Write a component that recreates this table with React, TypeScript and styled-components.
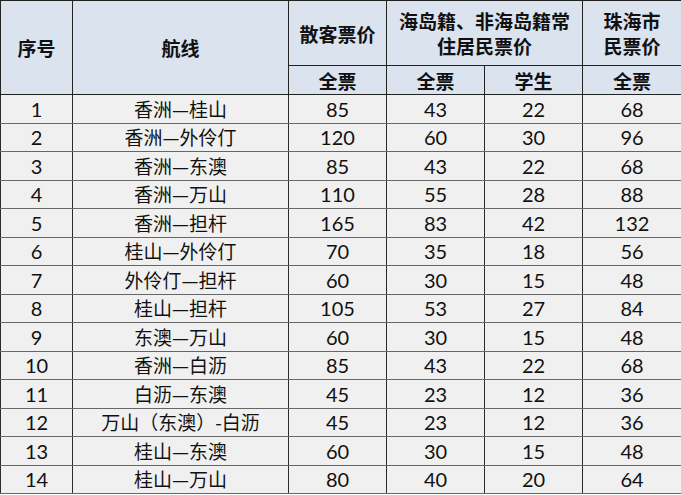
import styled, { createGlobalStyle } from 'styled-components';

type Fare = {
	id: number;
	route: string;
	walkIn: number;
	full: number;
	student: number;
	local: number;
};

const fares: Fare[] = [
	{ id: 1, route: '香洲—桂山', walkIn: 85, full: 43, student: 22, local: 68 },
	{ id: 2, route: '香洲—外伶仃', walkIn: 120, full: 60, student: 30, local: 96 },
	{ id: 3, route: '香洲—东澳', walkIn: 85, full: 43, student: 22, local: 68 },
	{ id: 4, route: '香洲—万山', walkIn: 110, full: 55, student: 28, local: 88 },
	{ id: 5, route: '香洲—担杆', walkIn: 165, full: 83, student: 42, local: 132 },
	{ id: 6, route: '桂山—外伶仃', walkIn: 70, full: 35, student: 18, local: 56 },
	{ id: 7, route: '外伶仃—担杆', walkIn: 60, full: 30, student: 15, local: 48 },
	{ id: 8, route: '桂山—担杆', walkIn: 105, full: 53, student: 27, local: 84 },
	{ id: 9, route: '东澳—万山', walkIn: 60, full: 30, student: 15, local: 48 },
	{ id: 10, route: '香洲—白沥', walkIn: 85, full: 43, student: 22, local: 68 },
	{ id: 11, route: '白沥—东澳', walkIn: 45, full: 23, student: 12, local: 36 },
	{ id: 12, route: '万山（东澳）-白沥', walkIn: 45, full: 23, student: 12, local: 36 },
	{ id: 13, route: '桂山—东澳', walkIn: 60, full: 30, student: 15, local: 48 },
	{ id: 14, route: '桂山—万山', walkIn: 80, full: 40, student: 20, local: 64 },
];

const colWidths = [72, 216, 98, 98, 98, 99];

export default function App() {
	return (
		<>
			<GlobalStyle />
			<FareTable>
				<colgroup>
					{colWidths.map((w, i) => (
						<col key={i} style={{ width: w }} />
					))}
				</colgroup>
				<thead>
					<TopHeadRow>
						<HeadCell rowSpan={2}>序号</HeadCell>
						<HeadCell rowSpan={2}>航线</HeadCell>
						<HeadCell>散客票价</HeadCell>
						<HeadCell colSpan={2}>
							海岛籍、非海岛籍常
							<br />
							住居民票价
						</HeadCell>
						<HeadCell>
							珠海市
							<br />
							民票价
						</HeadCell>
					</TopHeadRow>
					<SubHeadRow>
						<HeadCell>全票</HeadCell>
						<HeadCell>全票</HeadCell>
						<HeadCell>学生</HeadCell>
						<HeadCell>全票</HeadCell>
					</SubHeadRow>
				</thead>
				<tbody>
					{fares.map((f) => (
						<DataRow key={f.id}>
							<Cell>{f.id}</Cell>
							<Cell $cjk>{f.route}</Cell>
							<Cell>{f.walkIn}</Cell>
							<Cell>{f.full}</Cell>
							<Cell>{f.student}</Cell>
							<Cell>{f.local}</Cell>
						</DataRow>
					))}
				</tbody>
			</FareTable>
		</>
	);
}

const GlobalStyle = createGlobalStyle`
	html, body {
		margin: 0;
		padding: 0;
		background: #ffffff;
	}
`;

const FareTable = styled.table`
	width: 681px;
	table-layout: fixed;
	border-collapse: collapse;
	font-family: Lato, 'Noto Sans CJK SC', sans-serif;
	color: #111;
`;

const TopHeadRow = styled.tr`
	height: 65px;
`;

const SubHeadRow = styled.tr`
	height: 29px;
`;

const HeadCell = styled.th`
	background: #dbe3ef;
	border: 1px solid #222;
	font-family: 'Noto Sans CJK SC', sans-serif;
	font-weight: 700;
	font-size: 19px;
	line-height: 25px;
	padding: 0;
	text-align: center;
	vertical-align: middle;
`;

const DataRow = styled.tr`
	height: 28.5px;
`;

const Cell = styled.td<{ $cjk?: boolean }>`
	background: #f0f0f0;
	border: 1px solid #2a2a2a;
	border-top-color: #666;
	border-bottom-color: #666;
	padding: 0;
	text-align: center;
	vertical-align: middle;
	font-size: ${({ $cjk }) => ($cjk ? '19px' : '20px')};
	font-family: ${({ $cjk }) => ($cjk ? "'Noto Sans CJK SC', sans-serif" : "Lato, 'Noto Sans CJK SC', sans-serif")};
	line-height: 22px;
	white-space: nowrap;
`;
